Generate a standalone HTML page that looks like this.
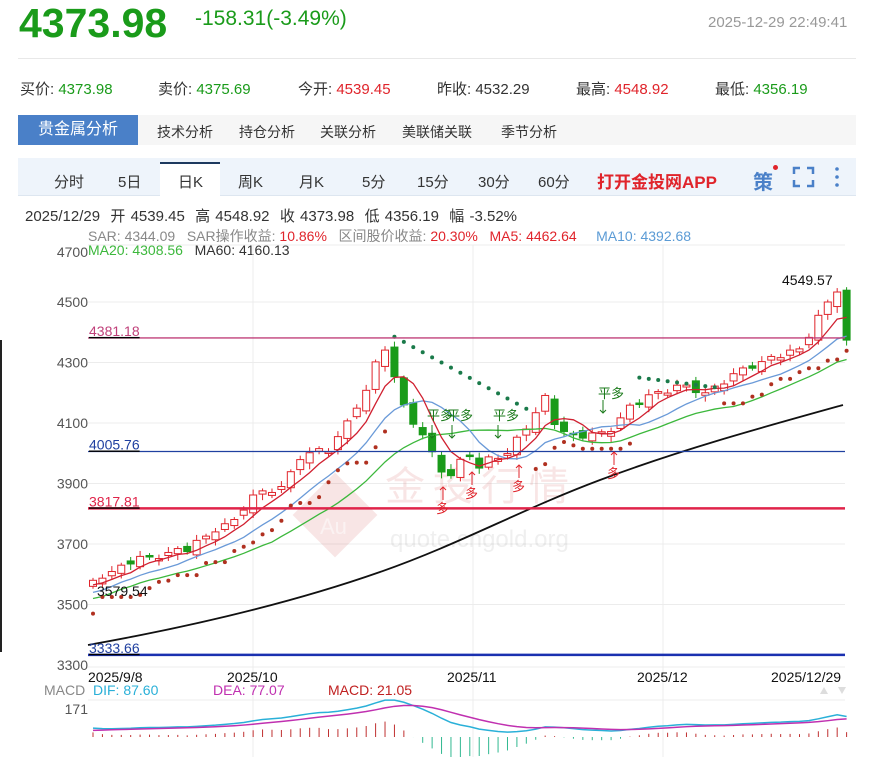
<!DOCTYPE html>
<html><head><meta charset="utf-8"><style>
body{margin:0;width:871px;height:757px;overflow:hidden;background:#fff;font-family:"Liberation Sans","Noto Sans CJK SC",sans-serif;position:relative}
.a{position:absolute;white-space:nowrap}
.g{color:#1a9b1a}.r{color:#e0242b}
.row{top:78px;font-size:15px;color:#333}
.tb{top:122px;font-size:14px;color:#333}
.pd{top:171px;font-size:15px;color:#333}
</style></head><body>
<div class="a" style="left:0;top:340px;width:2px;height:312px;background:#222"></div>
<div class="a g" style="left:19px;top:1px;font-size:41px;font-weight:bold;line-height:44px">4373.98</div>
<div class="a g" style="left:195px;top:7px;font-size:21px">-158.31(-3.49%)</div>
<div class="a" style="left:708px;top:14px;font-size:15px;color:#999">2025-12-29 22:49:41</div>
<div class="a" style="left:18px;top:58px;width:838px;height:1px;background:#e8e8e8"></div>
<div class="a row" style="left:20px">买价: <span class="g">4373.98</span></div>
<div class="a row" style="left:158px">卖价: <span class="g">4375.69</span></div>
<div class="a row" style="left:298px">今开: <span class="r">4539.45</span></div>
<div class="a row" style="left:437px">昨收: 4532.29</div>
<div class="a row" style="left:576px">最高: <span class="r">4548.92</span></div>
<div class="a row" style="left:715px">最低: <span class="g">4356.19</span></div>
<div class="a" style="left:18px;top:115px;width:838px;height:30px;background:#f6f6f6"></div>
<div class="a" style="left:18px;top:115px;width:120px;height:30px;background:#4a80c8;color:#fff;font-size:16px;line-height:30px;text-align:center">贵金属分析</div>
<div class="a tb" style="left:157px">技术分析</div>
<div class="a tb" style="left:239px">持仓分析</div>
<div class="a tb" style="left:320px">关联分析</div>
<div class="a tb" style="left:402px">美联储关联</div>
<div class="a tb" style="left:501px">季节分析</div>
<div class="a" style="left:18px;top:158px;width:838px;height:37px;background:#eef4fb;border-bottom:1px solid #dde6f0"></div>
<div class="a" style="left:160px;top:162px;width:60px;height:34px;background:#fff;border-top:2px solid #1e3a5f"></div>
<div class="a pd" style="left:54px">分时</div>
<div class="a pd" style="left:118px">5日</div>
<div class="a pd" style="left:178px">日K</div>
<div class="a pd" style="left:238px">周K</div>
<div class="a pd" style="left:299px">月K</div>
<div class="a pd" style="left:362px">5分</div>
<div class="a pd" style="left:417px">15分</div>
<div class="a pd" style="left:478px">30分</div>
<div class="a pd" style="left:538px">60分</div>
<div class="a r" style="left:597px;top:168px;font-size:17px;font-weight:bold">打开金投网APP</div>
<div class="a" style="left:753px;top:166px;font-size:20px;color:#4a80c8;font-weight:bold">策</div>
<div class="a" style="left:773px;top:165px;width:5px;height:5px;border-radius:50%;background:#e0242b"></div>
<svg class="a" style="left:0;top:0" width="871" height="757">
<g fill="none" stroke="#4a80c8" stroke-width="2.5"><path d="M794 174v-6h6M807 168h6v6M813 180v6h-6M800 186h-6v-6"/></g>
<g fill="#4a80c8"><circle cx="837" cy="169" r="1.8"/><circle cx="837" cy="177" r="1.8"/><circle cx="837" cy="185" r="1.8"/></g>
</svg>
<div class="a" style="left:25px;top:205px;font-size:15px;color:#333;word-spacing:1px">2025/12/29 &nbsp;开 4539.45 &nbsp;高 4548.92 &nbsp;收 4373.98 &nbsp;低 4356.19 &nbsp;幅 -3.52%</div>
<div class="a" style="left:88px;top:226px;font-size:14px;color:#888">SAR: 4344.09 &nbsp;&nbsp;SAR操作收益: <span class="r">10.86%</span> &nbsp;&nbsp;区间股价收益: <span class="r">20.30%</span> &nbsp;&nbsp;<span class="r">MA5: 4462.64</span> &nbsp;&nbsp;&nbsp;&nbsp;<span style="color:#5b9bd5">MA10: 4392.68</span></div>
<div class="a" style="left:88px;top:242px;font-size:14px;color:#333"><span style="color:#3cb83c">MA20: 4308.56</span> &nbsp;&nbsp;MA60: 4160.13</div>
<svg id="c" class="a" style="left:0;top:0" width="871" height="757" font-family="Liberation Sans, Noto Sans CJK SC, sans-serif"></svg>
<script>
var S=document.getElementById('c'),h='';
function Y(v){return 302+(4500-v)*0.3025}
h+='<g stroke="#ececec">';[Y(4500),Y(4300),Y(4100),Y(3900),Y(3700),Y(3500)].forEach(function(y){h+='<line x1="88" x2="845" y1="'+y+'" y2="'+y+'"/>'});
h+='<line x1="88" x2="845" y1="245" y2="245"/>';
[253,473,663].forEach(function(x){h+='<line x1="'+x+'" x2="'+x+'" y1="245" y2="757"/>'});h+='<line x1="88" x2="845" y1="667" y2="667"/><line x1="88" x2="845" y1="700" y2="700"/></g>';
h+='<g fill="#555" font-size="14" text-anchor="end">';[4500,4300,4100,3900,3700,3500,3300].forEach(function(v){h+='<text x="88" y="'+(Y(v)+5)+'">'+v+'</text>'});h+='<text x="88" y="257">4700</text><text x="88" y="714">171</text></g>';
h+='<g opacity="0.13"><text x="385" y="500" font-size="40" fill="#d04040" letter-spacing="8">金投行情</text><text x="390" y="547" font-size="24" fill="#888">quote.cngold.org</text><rect x="305" y="485" width="60" height="60" fill="#d04040" transform="rotate(45 335 515)"/></g><text x="320" y="534" font-size="22" fill="#fff" opacity="0.5">Au</text>';
var K=[[0,3580],[5,3650],[10,3680],[15,3780],[17,3860],[20,3880],[22,3990],[25,4010],[27,4100],[29,4200],[30,4300],[31,4350],[32,4250],[33,4150],[34,4100],[35,4050],[36,4000],[37,3950],[38,3920],[39,3980],[40,4000],[41,3950],[42,3980],[44,3990],[45,4050],[47,4130],[48,4180],[49,4100],[50,4060],[52,4050],[55,4080],[57,4150],[60,4200],[62,4220],[65,4200],[67,4230],[69,4280],[71,4300],[73,4320],[75,4340],[77,4450],[78,4500],[79,4540],[80,4374]];
var C=[];for(var k=0;k<K.length-1;k++){var a=K[k],b=K[k+1];for(var i=a[0];i<b[0];i++)C[i]=a[1]+(b[1]-a[1])*(i-a[0])/(b[0]-a[0])}C[80]=4374;
var n=81,X=function(i){return 93+i*9.42},O=[],nz=[5,-12,8,-6,14,-9,3,-15,10,-4,7,-11];
for(var i=0;i<n;i++){C[i]+=(i%3==1?-1:1)*((i*7)%13);O[i]=i?C[i-1]+nz[i%12]:3560;}O[80]=4539;C[80]=4374;
for(var i=0;i<n;i++){var o=O[i],c=C[i],hi=Math.max(o,c)+8+(i*5)%15,lo=Math.min(o,c)-8-(i*3)%14,up=c>=o,col=up?'#e0242b':'#1a9b1a',x=X(i);
if(i==80){hi=4549;lo=4356}
h+='<line x1="'+x+'" x2="'+x+'" y1="'+Y(hi)+'" y2="'+Y(lo)+'" stroke="'+col+'"/>';
var t=Y(Math.max(o,c)),hh=Math.max(1.5,Math.abs(Y(o)-Y(c)));h+='<rect x="'+(x-3.5)+'" y="'+t+'" width="7" height="'+hh+'" fill="'+(up?'#fff':col)+'" stroke="'+col+'"/>';}
function ma(p,off){var s='';for(var i=0;i<n;i++){var q=0,m=0;for(var j=Math.max(0,i-p+1);j<=i;j++){q+=C[j];m++}var v=q/m-(i<p?off*(p-i)/p:0);s+=X(i)+','+Y(v)+' '}return s}
h+='<polyline fill="none" stroke="#3cb83c" stroke-width="1.3" points="'+ma(20,60)+'"/>';
h+='<polyline fill="none" stroke="#6a9ad8" stroke-width="1.3" points="'+ma(10,40)+'"/>';
h+='<polyline fill="none" stroke="#d02030" stroke-width="1.3" points="'+ma(5,15)+'"/>';
h+='<path d="M88 645 C200 625 300 600 380 572 S520 510 600 480 S760 428 843 405" fill="none" stroke="#111" stroke-width="1.8"/>';
for(var i=0;i<n;i++){var x=X(i),v,cl;if(i>=32&&i<=46){v=4385-(i-32)*17;cl='#1a7a4a'}else if(i>=58&&i<=66){v=4250-(i-58)*4;cl='#1a7a4a'}else{var m=99999;for(var j=Math.max(0,i-4);j<=i;j++)m=Math.min(m,C[j]);v=m-35-(i<12?20:0);cl='#b03020'}if(i==0)v=3470;h+='<circle cx="'+x+'" cy="'+Y(v)+'" r="2" fill="'+cl+'"/>';}
h+='<line x1="88" x2="845" y1="'+Y(4381.18)+'" y2="'+Y(4381.18)+'" stroke="#c0407a" stroke-width="1.3"/><line x1="88" x2="845" y1="'+Y(4005.76)+'" y2="'+Y(4005.76)+'" stroke="#2040a0" stroke-width="1.2"/><line x1="88" x2="845" y1="'+Y(3817.81)+'" y2="'+Y(3817.81)+'" stroke="#e0244a" stroke-width="2.5"/><line x1="88" x2="845" y1="'+Y(3333.66)+'" y2="'+Y(3333.66)+'" stroke="#1a30b0" stroke-width="2.5"/>';
h+='<g font-size="14" text-decoration="underline"><text x="89" y="'+(Y(4381.18)-2)+'" fill="#c0407a">4381.18</text><text x="89" y="'+(Y(4005.76)-2)+'" fill="#2040a0">4005.76</text><text x="89" y="'+(Y(3817.81)-2)+'" fill="#e0244a">3817.81</text><text x="89" y="'+(Y(3333.66)-2)+'" fill="#2040a0">3333.66</text></g>';
h+='<text x="782" y="285" font-size="14" fill="#111">4549.57</text><text x="97" y="596" font-size="14" fill="#111">3579.54</text>';
h+='<g font-size="13" fill="#1a7a1a"><text x="427" y="420">平多</text><text x="447" y="420">平多</text><text x="493" y="420">平多</text><text x="598" y="398">平多</text></g>';
h+='<g stroke="#1a7a1a" fill="none"><path d="M432 425v13m-3-3l3 3 3-3M452 425v13m-3-3l3 3 3-3M498 425v13m-3-3l3 3 3-3M603 400v13m-3-3l3 3 3-3"/></g>';
h+='<g stroke="#e0242b" fill="none"><path d="M443 500v-13m-3 3l3-3 3 3M472 485v-13m-3 3l3-3 3 3M519 478v-13m-3 3l3-3 3 3M614 465v-13m-3 3l3-3 3 3"/></g>';
h+='<g font-size="13" fill="#e0242b"><text x="436" y="513">多</text><text x="465" y="498">多</text><text x="512" y="491">多</text><text x="607" y="478">多</text></g>';
h+='<g font-size="14" fill="#111"><text x="88" y="682">2025/9/8</text><text x="227" y="682">2025/10</text><text x="447" y="682">2025/11</text><text x="637" y="682">2025/12</text><text x="771" y="682">2025/12/29</text></g>';
h+='<text x="44" y="695" font-size="14" fill="#888">MACD</text><text x="93" y="695" font-size="14" fill="#2ab0d8">DIF: 87.60</text><text x="213" y="695" font-size="14" fill="#c030b0">DEA: 77.07</text><text x="328" y="695" font-size="14" fill="#c02020">MACD: 21.05</text>';
h+='<path d="M820 694l4-7 4 7zM838 687l4 7 4-7z" fill="#ddd"/>';
var e12=C[0],e26=C[0]-40,dea=25,dif=[],de=[];for(var i=0;i<n;i++){e12+=(C[i]-e12)*2/13;e26+=(C[i]-e26)*2/27;var d=e12-e26;dea+=(d-dea)*2/10;dif.push(d);de.push(dea)}
function M(v){return 737-v*0.24}var p1='',p2='';for(var i=0;i<n;i++){p1+=X(i)+','+M(dif[i])+' ';p2+=X(i)+','+M(de[i])+' ';var hv=(dif[i]-de[i])*2;h+='<line x1="'+X(i)+'" x2="'+X(i)+'" y1="737" y2="'+M(hv)+'" stroke="'+(hv>=0?'#c03030':'#30b890')+'"/>'}
h+='<polyline fill="none" stroke="#2ab0d8" stroke-width="1.5" points="'+p1+'"/><polyline fill="none" stroke="#c030b0" stroke-width="1.5" points="'+p2+'"/>';
S.innerHTML=h;
</script>
</body></html>
